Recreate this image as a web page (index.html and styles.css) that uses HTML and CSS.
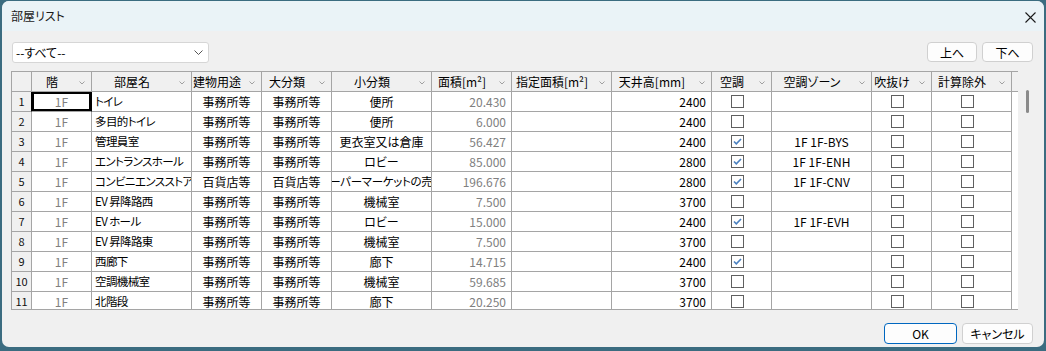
FILE: index.html
```html
<!DOCTYPE html>
<html lang="ja">
<head>
<meta charset="utf-8">
<title>部屋リスト</title>
<link rel="stylesheet" href="styles.css">
</head>
<body>
<div class="window">
  <div class="titlebar">
    <span class="title">部屋リスト</span>
    <svg class="close" width="11" height="11" viewBox="0 0 11 11"><path d="M0.5 0.5 L10.5 10.5 M10.5 0.5 L0.5 10.5" stroke="#1a1a1a" stroke-width="1.1" fill="none"/></svg>
  </div>
  <div class="content">
    <div class="toolbar">
      <div class="select">
        <span>--すべて--</span>
        <svg width="9" height="5" viewBox="0 0 9 5"><polyline points="0.5,0.5 4.5,4.5 8.5,0.5" stroke="#555" stroke-width="1" fill="none"/></svg>
      </div>
      <div class="movebtns">
        <button class="btn up">上へ</button>
        <button class="btn down">下へ</button>
      </div>
    </div>

    <div class="grid">
      <div class="table">
        <div class="row head">
          <div class="c rh"></div>
          <div class="c h"><span>階</span><i></i></div>
          <div class="c h"><span>部屋名</span><i></i></div>
          <div class="c h"><span>建物用途</span><i></i></div>
          <div class="c h"><span>大分類</span><i></i></div>
          <div class="c h"><span>小分類</span><i></i></div>
          <div class="c h"><span>面積[m²]</span><i></i></div>
          <div class="c h"><span>指定面積[m²]</span><i></i></div>
          <div class="c h"><span>天井高[mm]</span><i></i></div>
          <div class="c h"><span>空調</span><i></i></div>
          <div class="c h"><span>空調ゾーン</span><i></i></div>
          <div class="c h"><span>吹抜け</span><i></i></div>
          <div class="c h"><span>計算除外</span><i></i></div>
          <div class="fill"></div>
        </div>

        <div class="row">
          <div class="c rh">1</div><div class="c fl sel">1F</div><div class="c nm">トイレ</div><div class="c ct">事務所等</div><div class="c ct">事務所等</div><div class="c ct"><span>便所</span></div><div class="c num">20.430</div><div class="c"></div><div class="c rt">2400</div><div class="c cb"><b></b></div><div class="c ct"></div><div class="c cb"><b></b></div><div class="c cb"><b></b></div><div class="fill"></div>
        </div>
        <div class="row">
          <div class="c rh">2</div><div class="c fl">1F</div><div class="c nm">多目的トイレ</div><div class="c ct">事務所等</div><div class="c ct">事務所等</div><div class="c ct"><span>便所</span></div><div class="c num">6.000</div><div class="c"></div><div class="c rt">2400</div><div class="c cb"><b></b></div><div class="c ct"></div><div class="c cb"><b></b></div><div class="c cb"><b></b></div><div class="fill"></div>
        </div>
        <div class="row">
          <div class="c rh">3</div><div class="c fl">1F</div><div class="c nm">管理員室</div><div class="c ct">事務所等</div><div class="c ct">事務所等</div><div class="c ct"><span>更衣室又は倉庫</span></div><div class="c num">56.427</div><div class="c"></div><div class="c rt">2400</div><div class="c cb"><b class="on"></b></div><div class="c ct">1F 1F-BYS</div><div class="c cb"><b></b></div><div class="c cb"><b></b></div><div class="fill"></div>
        </div>
        <div class="row">
          <div class="c rh">4</div><div class="c fl">1F</div><div class="c nm">エントランスホール</div><div class="c ct">事務所等</div><div class="c ct">事務所等</div><div class="c ct"><span>ロビー</span></div><div class="c num">85.000</div><div class="c"></div><div class="c rt">2800</div><div class="c cb"><b class="on"></b></div><div class="c ct">1F 1F-ENH</div><div class="c cb"><b></b></div><div class="c cb"><b></b></div><div class="fill"></div>
        </div>
        <div class="row">
          <div class="c rh">5</div><div class="c fl">1F</div><div class="c nm">コンビニエンスストア</div><div class="c ct">百貨店等</div><div class="c ct">百貨店等</div><div class="c ct clip"><span>スーパーマーケットの売場</span></div><div class="c num">196.676</div><div class="c"></div><div class="c rt">2800</div><div class="c cb"><b class="on"></b></div><div class="c ct">1F 1F-CNV</div><div class="c cb"><b></b></div><div class="c cb"><b></b></div><div class="fill"></div>
        </div>
        <div class="row">
          <div class="c rh">6</div><div class="c fl">1F</div><div class="c nm">EV 昇降路西</div><div class="c ct">事務所等</div><div class="c ct">事務所等</div><div class="c ct"><span>機械室</span></div><div class="c num">7.500</div><div class="c"></div><div class="c rt">3700</div><div class="c cb"><b></b></div><div class="c ct"></div><div class="c cb"><b></b></div><div class="c cb"><b></b></div><div class="fill"></div>
        </div>
        <div class="row">
          <div class="c rh">7</div><div class="c fl">1F</div><div class="c nm">EV ホール</div><div class="c ct">事務所等</div><div class="c ct">事務所等</div><div class="c ct"><span>ロビー</span></div><div class="c num">15.000</div><div class="c"></div><div class="c rt">2400</div><div class="c cb"><b class="on"></b></div><div class="c ct">1F 1F-EVH</div><div class="c cb"><b></b></div><div class="c cb"><b></b></div><div class="fill"></div>
        </div>
        <div class="row">
          <div class="c rh">8</div><div class="c fl">1F</div><div class="c nm">EV 昇降路東</div><div class="c ct">事務所等</div><div class="c ct">事務所等</div><div class="c ct"><span>機械室</span></div><div class="c num">7.500</div><div class="c"></div><div class="c rt">3700</div><div class="c cb"><b></b></div><div class="c ct"></div><div class="c cb"><b></b></div><div class="c cb"><b></b></div><div class="fill"></div>
        </div>
        <div class="row">
          <div class="c rh">9</div><div class="c fl">1F</div><div class="c nm">西廊下</div><div class="c ct">事務所等</div><div class="c ct">事務所等</div><div class="c ct"><span>廊下</span></div><div class="c num">14.715</div><div class="c"></div><div class="c rt">2400</div><div class="c cb"><b class="on"></b></div><div class="c ct"></div><div class="c cb"><b></b></div><div class="c cb"><b></b></div><div class="fill"></div>
        </div>
        <div class="row">
          <div class="c rh">10</div><div class="c fl">1F</div><div class="c nm">空調機械室</div><div class="c ct">事務所等</div><div class="c ct">事務所等</div><div class="c ct"><span>機械室</span></div><div class="c num">59.685</div><div class="c"></div><div class="c rt">3700</div><div class="c cb"><b></b></div><div class="c ct"></div><div class="c cb"><b></b></div><div class="c cb"><b></b></div><div class="fill"></div>
        </div>
        <div class="row">
          <div class="c rh">11</div><div class="c fl">1F</div><div class="c nm">北階段</div><div class="c ct">事務所等</div><div class="c ct">事務所等</div><div class="c ct"><span>廊下</span></div><div class="c num">20.250</div><div class="c"></div><div class="c rt">3700</div><div class="c cb"><b></b></div><div class="c ct"></div><div class="c cb"><b></b></div><div class="c cb"><b></b></div><div class="fill"></div>
        </div>
      </div>
      <div class="scrollbar"><div class="thumb"></div></div>
    </div>

    <div class="footer">
      <button class="btn ok">OK</button>
      <button class="btn cancel">キャンセル</button>
    </div>
  </div>
</div>
</body>
</html>
```

FILE: styles.css
```css
html, body {
  margin: 0;
  padding: 0;
}
body {
  width: 1046px;
  height: 351px;
  box-sizing: border-box;
  padding: 1px 2px 4px 2px;
  background: #3b6c80;
  font-family: "Noto Sans CJK JP", "Noto Sans", sans-serif;
  font-size: 12px;
  font-feature-settings: "palt";
  color: #000;
  overflow: hidden;
}
.window {
  height: 100%;
  background: #f0f0f0;
  border-radius: 7px;
  overflow: hidden;
  display: flex;
  flex-direction: column;
}
.titlebar {
  height: 30px;
  flex: 0 0 30px;
  background: #eaf3f7;
  display: flex;
  align-items: center;
  justify-content: space-between;
  padding: 0 8px 0 9px;
}
.title {
  font-size: 12px;
  color: #1a1a1a;
  line-height: 16px;
  margin-top: -1px;
}
.close {
  display: block;
  margin-top: 2px;
}
.content {
  flex: 1;
  padding: 11px 11px 0 9px;
  display: flex;
  flex-direction: column;
}
.toolbar {
  display: flex;
  justify-content: space-between;
  align-items: flex-start;
  height: 21px;
}
.select {
  margin-left: 1px;
  width: 197px;
  height: 21px;
  box-sizing: border-box;
  background: #fff;
  border: 1px solid #d6d6d6;
  border-radius: 3px;
  display: flex;
  align-items: center;
  justify-content: space-between;
  padding: 0 5px 0 3px;
  line-height: 18px;
}
.select svg {
  display: block;
}
.movebtns {
  display: flex;
  gap: 5px;
}
.btn {
  font-family: "Noto Sans CJK JP", "Noto Sans", sans-serif;
  font-size: 12px;
  font-feature-settings: "palt";
  color: #000;
  background: #fdfdfd;
  border: 1px solid #d0d0d0;
  border-radius: 4px;
  padding: 0;
  height: 20px;
  line-height: 17px;
  box-sizing: border-box;
}
.up { width: 50px; }
.down { width: 51px; }

.grid {
  margin-top: 8px;
  height: 239px;
  display: flex;
}
.table {
  flex: 0 0 1007px;
  box-sizing: border-box;
  border-left: 1px solid #a5a5a5;
  border-top: 1px solid #a5a5a5;
  border-bottom: 1px solid #a5a5a5;
  background: #fff;
  overflow: hidden;
}
.row {
  display: grid;
  grid-template-columns: 20px 60px 100px 70px 70px 100px 80px 100px 100px 60px 100px 60px 80px 1fr;
  height: 20px;
}
.c {
  box-sizing: border-box;
  border-right: 1px solid #a5a5a5;
  border-bottom: 1px solid #a5a5a5;
  height: 20px;
  line-height: 19px;
  white-space: nowrap;
  overflow: hidden;
  background: #fff;
}
.fill {
  background: #fff;
  border-bottom: 1px solid #fff;
}
.head .c, .head .fill {
  background: #f0f0f0;
}
.head .fill {
  border-bottom: 1px solid #a5a5a5;
}
.rh {
  background: #f0f0f0 !important;
  text-align: center;
  font-size: 11px;
  color: #111;
}
.h {
  display: flex;
  align-items: center;
}
.h span {
  flex: 1;
  text-align: center;
  overflow: hidden;
  white-space: nowrap;
}
.h i {
  flex: 0 0 19px;
  height: 19px;
  display: block;
  background: no-repeat 7px 9px / 6px 4px url("data:image/svg+xml,%3Csvg xmlns='http://www.w3.org/2000/svg' width='6' height='4' viewBox='0 0 6 4'%3E%3Cpolyline points='0.5,0.5 3,3 5.5,0.5' stroke='%23a0a0a0' stroke-width='1' fill='none'/%3E%3C/svg%3E");
}
.fl {
  text-align: center;
  color: #808080;
}
.sel {
  box-shadow: inset 0 0 0 2px #000;
  border-left: 1px solid #000;
  margin-left: -1px;
  border-right-color: #000;
}
.nm {
  padding-left: 3px;
  font-size: 11.5px;
  letter-spacing: -0.6px;
}
.ct {
  display: flex;
  justify-content: center;
}
.ct span {
  flex: 0 0 auto;
  white-space: nowrap;
}
.clip span {
  font-size: 11.5px;
  letter-spacing: -0.3px;
}
.num {
  text-align: right;
  padding-right: 5px;
  color: #808080;
}
.rt {
  text-align: right;
  padding-right: 5px;
}
.cb {
  display: flex;
  justify-content: center;
  align-items: center;
  padding-right: 8px;
}
.cb b {
  display: block;
  width: 13px;
  height: 13px;
  box-sizing: border-box;
  border: 1px solid #5f5f5f;
  background: #fff;
  margin-top: -1px;
}
.cb b.on {
  background: #fff no-repeat center / 9px 7px url("data:image/svg+xml,%3Csvg xmlns='http://www.w3.org/2000/svg' width='9' height='7' viewBox='0 0 9 7'%3E%3Cpolyline points='1,3.5 3.3,5.8 8,1' stroke='%234a80c0' stroke-width='1.6' fill='none'/%3E%3C/svg%3E");
}
.scrollbar {
  flex: 1;
  position: relative;
  background: #f0f0f0;
}
.thumb {
  position: absolute;
  left: 8px;
  top: 19px;
  width: 3px;
  height: 23px;
  border-radius: 2px;
  background: #8a8a8a;
}
.footer {
  margin-top: 13px;
  display: flex;
  justify-content: flex-end;
  gap: 5px;
}
.ok {
  width: 73px;
  height: 21px;
  border-color: #0067c0;
}
.cancel {
  width: 71px;
  height: 21px;
}
```
